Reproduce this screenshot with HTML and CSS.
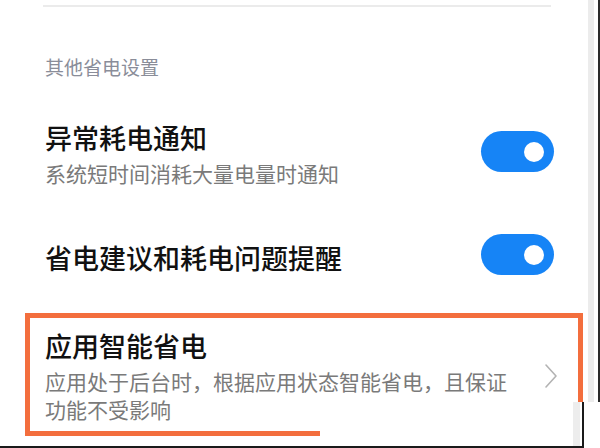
FILE: index.html
```html
<!DOCTYPE html>
<html lang="zh-CN">
<head>
<meta charset="utf-8">
<link rel="stylesheet" href="styles.css">
</head>
<body>
<div class="page">
  <div class="content">
    <div class="divider"></div>
    <div class="section-title">其他省电设置</div>

    <div class="row row-first">
      <div class="text">
        <div class="title">异常耗电通知</div>
        <div class="sub">系统短时间消耗大量电量时通知</div>
      </div>
      <div class="toggle toggle-first"><span class="knob"></span></div>
    </div>

    <div class="row row-second">
      <div class="text text-single">
        <div class="title">省电建议和耗电问题提醒</div>
      </div>
      <div class="toggle"><span class="knob"></span></div>
    </div>

    <div class="highlight">
      <div class="text">
        <div class="title">应用智能省电</div>
        <div class="sub sub-wrap">应用处于后台时，根据应用状态智能省电，且保证功能不受影响</div>
      </div>
      <svg class="chevron" width="14" height="26" viewBox="0 0 14 26">
        <polyline points="2,2 12,13 2,24" fill="none" stroke="#b3b3b3" stroke-width="1.6" stroke-linecap="round" stroke-linejoin="round"/>
      </svg>
    </div>
  </div>
  <div class="rail"></div>
  <div class="edge-right"></div>
  <div class="edge-gray"></div>
  <div class="edge-line"></div>
  <div class="edge-bottom"></div>
</div>
</body>
</html>
```

FILE: styles.css
```css
html, body {
  margin: 0;
  padding: 0;
  background: #ffffff;
}

.page {
  position: relative;
  width: 600px;
  height: 448px;
  overflow: hidden;
  background: #ffffff;
  font-family: "Noto Sans CJK SC", "Noto Sans", sans-serif;
}

.content {
  display: flex;
  flex-direction: column;
}

.divider {
  margin: 5px 0 0 43px;
  width: 508px;
  height: 2px;
  background: #ebebeb;
}

.section-title {
  margin-top: 46px;
  padding-left: 45px;
  font-size: 19px;
  line-height: 28px;
  color: #8a8d99;
}

.row {
  display: flex;
  padding: 0 46px 0 45px;
}

.row-first {
  margin-top: 40px;
  align-items: flex-start;
}

.row-second {
  margin-top: 47px;
  align-items: center;
}

.text {
  flex: 1;
  display: flex;
  flex-direction: column;
}

.text-single {
  padding-top: 6px;
}

.title {
  font-size: 27px;
  line-height: 34px;
  font-weight: 500;
  color: #111111;
}

.sub {
  margin-top: 4px;
  font-size: 21px;
  line-height: 28px;
  color: #7a7a7a;
}

.sub-wrap {
  width: 470px;
}

.toggle {
  width: 73px;
  height: 41px;
  border-radius: 21px;
  background: #1684f6;
  display: flex;
  align-items: center;
  justify-content: flex-end;
  padding-right: 10px;
  box-sizing: border-box;
}

.toggle-first {
  margin-top: 10px;
}

.knob {
  width: 20px;
  height: 20px;
  border-radius: 50%;
  background: #ffffff;
}

.highlight {
  position: relative;
  margin: 38px 0 0 25px;
  width: 558px;
  box-sizing: border-box;
  border-top: 5px solid #f36e3d;
  border-left: 5px solid #f36e3d;
  padding: 11px 25px 13px 15px;
  display: flex;
  align-items: center;
}

.highlight::before {
  content: "";
  position: absolute;
  right: 0;
  top: -5px;
  width: 5px;
  height: 89px;
  background: #f36e3d;
}

.highlight::after {
  content: "";
  position: absolute;
  left: -5px;
  bottom: 0;
  width: 295px;
  height: 5px;
  background: #f36e3d;
}

.chevron {
  flex: none;
}

.rail {
  position: absolute;
  left: 588px;
  top: 0;
  width: 6px;
  height: 402px;
  background: #ececec;
}

.edge-right {
  position: absolute;
  left: 598px;
  top: 0;
  width: 2px;
  height: 402px;
  background: #2a2a2a;
}

.edge-gray {
  position: absolute;
  left: 573px;
  top: 402px;
  width: 7px;
  height: 46px;
  background: #ededed;
}

.edge-line {
  position: absolute;
  left: 582px;
  top: 402px;
  width: 2px;
  height: 46px;
  background: #1a1a1a;
}

.edge-bottom {
  position: absolute;
  left: 0;
  top: 446px;
  width: 584px;
  height: 2px;
  background: #1a1a1a;
}
```
